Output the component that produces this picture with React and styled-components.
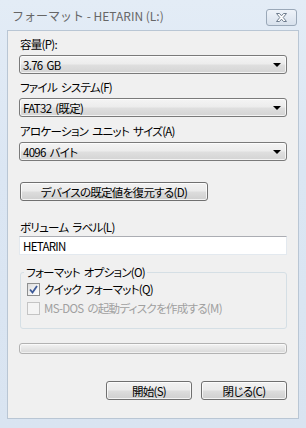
import React from "react";
import styled, { createGlobalStyle } from "styled-components";

const Global = createGlobalStyle`
  html, body { margin: 0; padding: 0; }
  body { width: 306px; height: 428px; overflow: hidden; }
  * { box-sizing: border-box; }
`;

const FONT = `"Noto Sans CJK JP", "Noto Sans", "Liberation Sans", sans-serif`;

const Window = styled.div`
  width: 306px;
  height: 428px;
  display: flex;
  flex-direction: column;
  background: linear-gradient(180deg, #e3ecf6 0%, #dbe6f3 40%, #d9e4f1 100%);
  font-family: ${FONT};
  font-size: 12px;
  color: #000;
`;

const TitleBar = styled.div`
  height: 30px;
  flex: none;
  display: flex;
  align-items: center;
  justify-content: space-between;
  padding: 0 9px 0 12px;
`;

const Title = styled.div`
  font-size: 12px;
  line-height: 14px;
  color: #666;
  margin-top: 2px;
`;

const CloseButton = styled.div`
  width: 31px;
  height: 17px;
  margin-top: 4px;
  border: 1px solid #9aa8b8;
  border-radius: 3px;
  background: linear-gradient(180deg, #eef3f9 0%, #e3eaf3 50%, #d8e1ec 100%);
  display: flex;
  align-items: center;
  justify-content: center;
`;

const Client = styled.div`
  flex: 1;
  margin: 0 7px 9px;
  background: #f0f0f0;
  border: 1px solid #b9c6d4;
  padding: 6px 11px 0;
  display: flex;
  flex-direction: column;
  font-size: 11.5px;
  font-feature-settings: "palt";
  letter-spacing: -0.7px;
  word-spacing: 2px;
`;

const Label = styled.div`
  height: 14px;
  line-height: 14px;
  margin-top: ${(p) => p.$mt || 0}px;
  padding-left: 1px;
  white-space: nowrap;
`;

const Combo = styled.div`
  height: 19px;
  margin-top: ${(p) => p.$mt || 0}px;
  border: 1px solid #7a7a7a;
  border-radius: 3px;
  background: linear-gradient(180deg, #f4f4f4 0%, #ececec 48%, #dfdfdf 52%, #d4d4d4 100%);
  display: flex;
  align-items: center;
  justify-content: space-between;
  padding: 0 5px 0 3px;
  line-height: 14px;
  box-shadow: inset 0 0 0 1px rgba(255, 255, 255, 0.7);
`;

const Arrow = styled.span`
  width: 0;
  height: 0;
  border-left: 4px solid transparent;
  border-right: 4px solid transparent;
  border-top: 4px solid #000;
  margin-top: 1px;
`;

const Button = styled.div`
  width: ${(p) => p.$w}px;
  height: 19px;
  margin-top: ${(p) => p.$mt || 0}px;
  margin-left: ${(p) => p.$ml || 0}px;
  border: 1px solid #707070;
  border-radius: 3px;
  background: linear-gradient(180deg, #f2f2f2 0%, #ebebeb 48%, #dddddd 52%, #cfcfcf 100%);
  box-shadow: inset 0 0 0 1px rgba(255, 255, 255, 0.75);
  display: flex;
  align-items: center;
  justify-content: center;
  line-height: 14px;
  white-space: nowrap;
`;

const TextInput = styled.div`
  height: 19px;
  margin-top: ${(p) => p.$mt || 0}px;
  background: #fff;
  border: 1px solid #e3e9ef;
  border-top-color: #abadb3;
  display: flex;
  align-items: center;
  padding-left: 3px;
  line-height: 14px;
`;

const Group = styled.fieldset`
  margin: 11px 0 0 1px;
  padding: 4px 0 6px 6px;
  border: 1px solid #d5dfe5;
  border-radius: 3px;
  min-width: 0;
  height: 63px;
  display: flex;
  flex-direction: column;
  gap: 6px;
`;

const Legend = styled.legend`
  padding: 0 2px;
  margin-left: -3px;
  line-height: 13px;
`;

const CheckRow = styled.div`
  display: flex;
  align-items: center;
  gap: 4px;
  height: 13px;
  color: ${(p) => (p.$disabled ? "#a0a0a0" : "#000")};
  white-space: nowrap;
  line-height: 13px;
`;

const Box = styled.span`
  width: 13px;
  height: 13px;
  flex: none;
  border: 1px solid ${(p) => (p.$disabled ? "#c4c4c4" : "#8e8f8f")};
  background: ${(p) =>
    p.$disabled
      ? "#f4f4f4"
      : "linear-gradient(135deg, #dcdcdc 0%, #f4f4f4 60%, #fdfdfd 100%)"};
  display: flex;
  align-items: center;
  justify-content: center;
`;

const Progress = styled.div`
  height: 11px;
  margin-top: 14px;
  border: 1px solid #b2b2b2;
  border-radius: 3px;
  background: linear-gradient(180deg, #f3f3f3 0%, #e6e6e6 50%, #d8d8d8 100%);
  box-shadow: inset 0 0 0 1px rgba(255, 255, 255, 0.6);
`;

const ButtonRow = styled.div`
  display: flex;
  justify-content: flex-end;
  gap: 9px;
  margin-top: 27px;
`;

export default function App() {
  return (
    <>
      <Global />
      <Window>
        <TitleBar>
          <Title>フォーマット - HETARIN (L:)</Title>
          <CloseButton>
            <svg width="13" height="11" viewBox="0 0 13 11">
              <path
                d="M1.5 1.5 L4.5 1.5 L6.5 3.8 L8.5 1.5 L11.5 1.5 L8.2 5.5 L11.5 9.5 L8.5 9.5 L6.5 7.2 L4.5 9.5 L1.5 9.5 L4.8 5.5 Z"
                fill="#fff"
                stroke="#6f7d8e"
                strokeWidth="1"
                strokeLinejoin="round"
              />
            </svg>
          </CloseButton>
        </TitleBar>
        <Client>
          <Label>容量(P):</Label>
          <Combo $mt={4}>
            <span>3.76 GB</span>
            <Arrow />
          </Combo>
          <Label $mt={6}>ファイル システム(F)</Label>
          <Combo $mt={4}>
            <span>FAT32 (既定)</span>
            <Arrow />
          </Combo>
          <Label $mt={7}>アロケーション ユニット サイズ(A)</Label>
          <Combo $mt={4}>
            <span>4096 バイト</span>
            <Arrow />
          </Combo>
          <Button $w={188} $mt={21} $ml={1}>
            デバイスの既定値を復元する(D)
          </Button>
          <Label $mt={19}>ボリューム ラベル(L)</Label>
          <TextInput $mt={2}>HETARIN</TextInput>
          <Group>
            <Legend>フォーマット オプション(O)</Legend>
            <CheckRow>
              <Box>
                <svg width="9" height="9" viewBox="0 0 9 9">
                  <path
                    d="M1 4.5 L3.5 7.5 L8 1"
                    fill="none"
                    stroke="#3d5a98"
                    strokeWidth="1.8"
                  />
                </svg>
              </Box>
              クイック フォーマット(Q)
            </CheckRow>
            <CheckRow $disabled>
              <Box $disabled />
              MS-DOS の起動ディスクを作成する(M)
            </CheckRow>
          </Group>
          <Progress />
          <ButtonRow>
            <Button $w={86}>開始(S)</Button>
            <Button $w={86}>閉じる(C)</Button>
          </ButtonRow>
        </Client>
      </Window>
    </>
  );
}
